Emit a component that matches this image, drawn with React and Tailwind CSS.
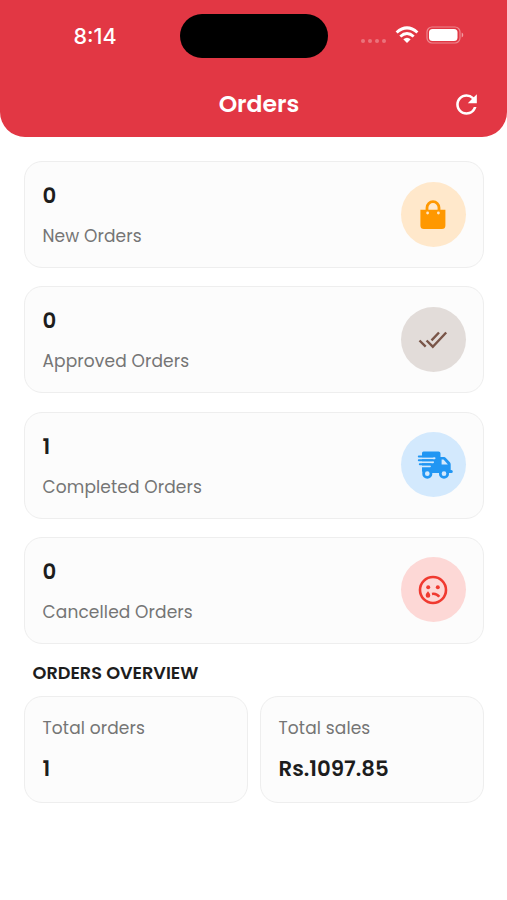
import React from "react";
import { MdRefresh } from "react-icons/md";

function BagIcon() {
  return (
    <svg className="mt-px h-[30px] w-[30px]" viewBox="0 0 30 30" fill="none">
      <path d="M9 11V7.7a6 6 0 0 1 12 0V11" stroke="#ff9800" strokeWidth="2.8" />
      <path d="M2.4 9.7h25v15.8a3.5 3.5 0 0 1-3.5 3.5h-18a3.5 3.5 0 0 1-3.5-3.5z" fill="#ff9800" />
      <circle cx="9.6" cy="13" r="1.4" fill="#ffe7c8" />
      <circle cx="20.4" cy="13" r="1.4" fill="#ffe7c8" />
    </svg>
  );
}

function DoneAllIcon() {
  return (
    <svg className="mt-px h-[30px] w-[30px]" viewBox="0 0 30 30" fill="none" stroke="#795548" strokeWidth="2.4">
      <path d="M28.2 7.5 14.8 21.7 8.6 15.5" />
      <path d="M21 7.5 13.5 15.4M1.5 15.5l6.2 6.2" />
    </svg>
  );
}

function TruckIcon() {
  return (
    <svg className="ml-[4px] h-[30px] w-[36px]" viewBox="0 0 36 30" fill="none">
      <path
        fillRule="evenodd"
        d="M6.5 1.5h15a2 2 0 0 1 2 2V7H27q1.1 0 1.9.9l4 4.4q.8.9.8 2.1V20h.6a1.2 1.2 0 0 1 0 3H7a2 2 0 0 1-2-2V3a1.5 1.5 0 0 1 1.5-1.5zM24.6 9.4v5.2h6.3l-4.4-5.2z"
        fill="#2196f3"
      />
      <path d="M1.5 8.3h16M2 12.2h14" stroke="#d3e9fd" strokeWidth="2" strokeLinecap="round" />
      <path d="M4 16.3h9" stroke="#d3e9fd" strokeWidth="1.8" strokeLinecap="round" />
      <path d="M1.8 6.4h14M1.8 10.3h13.5M2.8 14.3h11" stroke="#2196f3" strokeWidth="2" strokeLinecap="round" />
      <circle cx="10.3" cy="23.7" r="3.7" fill="#d3e9fd" stroke="#2196f3" strokeWidth="2.7" />
      <circle cx="27" cy="23.7" r="3.7" fill="#d3e9fd" stroke="#2196f3" strokeWidth="2.7" />
    </svg>
  );
}

function CryIcon() {
  return (
    <svg className="h-[30px] w-[30px]" viewBox="0 0 30 30" fill="none">
      <circle cx="15" cy="15" r="13" stroke="#f03a30" strokeWidth="2.6" />
      <circle cx="10.2" cy="12.3" r="2" fill="#f03a30" />
      <circle cx="19.8" cy="12.3" r="2" fill="#f03a30" />
      <path d="M10 16.3s-2.3 2.5-2.3 4.2a2.3 2.3 0 0 0 4.6 0c0-1.7-2.3-4.2-2.3-4.2z" fill="#f03a30" />
      <path d="M14 18.9q4.3-.9 7.3 2.9" stroke="#f03a30" strokeWidth="2.6" />
    </svg>
  );
}

function WifiIcon() {
  return (
    <svg className="h-[18px] w-[24px]" viewBox="0 0 24 18" fill="none">
      <path d="M1.6 6.5Q12-2.7 22.4 6.5" stroke="white" strokeWidth="3" />
      <path d="M5.3 10.5Q12 4.6 18.7 10.5" stroke="white" strokeWidth="2.9" />
      <path d="M12 17 8.3 13.2q3.7-3.1 7.4 0z" fill="white" />
    </svg>
  );
}

function BatteryIcon() {
  return (
    <svg className="h-[18px] w-[38px]" viewBox="0 0 38 18" fill="none">
      <rect x="1" y="1" width="33" height="16" rx="5" stroke="white" strokeOpacity=".4" strokeWidth="1.2" />
      <rect x="3" y="3" width="28.5" height="12" rx="3.5" fill="white" />
      <path d="M35.7 6.5q1.6.8 1.6 2.5t-1.6 2.5z" fill="white" fillOpacity=".5" />
    </svg>
  );
}

const stats = [
  { value: "0", label: "New Orders", tint: "bg-[#ffe8cb]", icon: <BagIcon /> },
  { value: "0", label: "Approved Orders", tint: "bg-[#e2dcd9]", icon: <DoneAllIcon /> },
  { value: "1", label: "Completed Orders", tint: "bg-[#d3e9fd]", icon: <TruckIcon /> },
  { value: "0", label: "Cancelled Orders", tint: "bg-[#fdd8d6]", icon: <CryIcon /> },
];

const card = "h-[107px] rounded-[18px] border border-[#eeeeee] bg-[#fcfcfc]";
const valueText = "text-[21.3px] leading-[28px] font-semibold text-[#1d1d1d]";
const labelText = "text-[17px] leading-[26px] tracking-[0.13px] text-[#757575]";

function StatCard({ value, label, tint, icon }) {
  return (
    <div className={`${card} flex items-center justify-between pr-[17px] pl-[18px]`}>
      <div className="flex flex-col gap-[13px] pt-[2px]">
        <div className={valueText}>{value}</div>
        <div className={labelText}>{label}</div>
      </div>
      <div className={`mb-px flex h-[65px] w-[65px] items-center justify-center rounded-full ${tint}`}>{icon}</div>
    </div>
  );
}

function TotalCard({ label, value }) {
  return (
    <div className={`${card} flex flex-1 flex-col justify-center gap-[14px] px-[18px] pb-[2px]`}>
      <div className={labelText}>{label}</div>
      <div className={valueText}>{value}</div>
    </div>
  );
}

export default function App() {
  return (
    <div className="h-[900px] w-full overflow-hidden bg-white font-['Poppins','Inter',sans-serif]">
      <header className="h-[136.5px] rounded-b-[25px] bg-[#e23744] text-white">
        <div className="grid h-[72px] grid-cols-[180px_148px_1fr] items-center">
          <div className="pl-[10px] text-center font-['Inter',sans-serif] text-[21.5px] font-medium">8:14</div>
          <div className="h-[44px] rounded-full bg-black" />
          <div className="flex items-center pl-[33px]">
            <div className="mt-[10px] flex gap-[3px]">
              {[0, 1, 2, 3].map((dot) => (
                <span key={dot} className="h-[4px] w-[4px] rounded-full bg-white/30" />
              ))}
            </div>
            <span className="mb-[2px] ml-[9px]"><WifiIcon /></span>
            <span className="mb-[2px] ml-[7px]"><BatteryIcon /></span>
          </div>
        </div>
        <div className="grid h-[64px] grid-cols-[1fr_auto_1fr] items-center pr-[25px] pl-[36px]">
          <span />
          <h1 className="text-[23.5px] font-semibold">Orders</h1>
          <MdRefresh className="h-[31px] w-[31px] justify-self-end" />
        </div>
      </header>

      <main className="px-[23.5px] pt-[24.5px]">
        <div className="flex flex-col gap-[18.3px]">
          {stats.map((stat) => (
            <StatCard key={stat.label} {...stat} />
          ))}
        </div>
        <h2 className="mt-[15.5px] mb-[10px] pl-[9px] text-[17.7px] leading-[27px] font-semibold text-[#1d1d1d]">
          ORDERS OVERVIEW
        </h2>
        <div className="flex gap-[12px]">
          <TotalCard label="Total orders" value="1" />
          <TotalCard label="Total sales" value="Rs.1097.85" />
        </div>
      </main>
    </div>
  );
}
